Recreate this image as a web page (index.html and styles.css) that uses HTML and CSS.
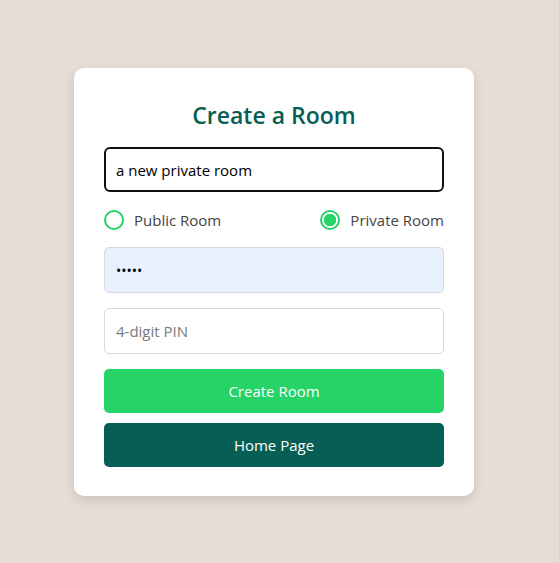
FILE: index.html
```html
<!DOCTYPE html>
<html lang="en">
<head>
<meta charset="utf-8">
<title>Create a Room</title>
<link rel="stylesheet" href="styles.css">
</head>
<body>
<div class="card">
  <h2 class="title">Create a Room</h2>
  <form class="form">
    <input class="field field-focus" type="text" value="a new private room">
    <div class="radios">
      <label class="radio"><input type="radio" name="type"><span>Public Room</span></label>
      <label class="radio"><input type="radio" name="type" checked><span>Private Room</span></label>
    </div>
    <input class="field field-auto" type="password" value="12345">
    <input class="field" type="text" placeholder="4-digit PIN">
    <button type="button" class="btn btn-create">Create Room</button>
    <button type="button" class="btn btn-home">Home Page</button>
  </form>
</div>
</body>
</html>
```

FILE: styles.css
```css
html, body {
  margin: 0;
  padding: 0;
}
body {
  background: #e5ddd6;
  min-height: 100vh;
  display: flex;
  align-items: center;
  justify-content: center;
  padding-right: 11px;
  padding-top: 1px;
  box-sizing: border-box;
  font-family: "Open Sans", "Noto Sans", sans-serif;
}
.card {
  width: 400px;
  box-sizing: border-box;
  background: #fff;
  border-radius: 10px;
  box-shadow: 0 4px 12px rgba(0, 0, 0, 0.12);
  padding: 31px 30px 29px;
}
.title {
  margin: 0 0 16px;
  text-align: center;
  color: #075e54;
  font-size: 23px;
  font-weight: 600;
  line-height: 32px;
}
.form {
  display: flex;
  flex-direction: column;
}
.field {
  height: 46px;
  box-sizing: border-box;
  border: 1px solid #d9d9d9;
  border-radius: 5px;
  padding: 0 11px;
  font-family: inherit;
  font-size: 15px;
  color: #000;
  background: #fff;
  outline: none;
  margin-bottom: 15px;
}
.field::placeholder {
  color: #7a7a7a;
}
.field-focus {
  border: 2px solid #111;
  border-radius: 6px;
  padding: 0 10px;
  height: 45px;
  margin-bottom: 0;
}
.field-auto {
  background: #e8f0fe;
  font-size: 14px;
}
.radios {
  display: flex;
  justify-content: space-between;
  align-items: center;
  height: 55px;
}
.radio {
  display: flex;
  align-items: center;
  gap: 10px;
  font-size: 15px;
  color: #444;
}
.radio input {
  appearance: none;
  -webkit-appearance: none;
  margin: 0;
  width: 20px;
  height: 20px;
  border: 2px solid #25d366;
  border-radius: 50%;
  box-sizing: border-box;
  background: #fff;
}
.radio input:checked {
  background: radial-gradient(circle, #25d366 0 6px, #fff 6.5px);
}
.btn {
  height: 44px;
  border: none;
  border-radius: 5px;
  color: #fff;
  font-family: inherit;
  font-size: 15px;
  cursor: pointer;
}
.btn-create {
  background: #25d366;
  margin-bottom: 10px;
}
.btn-home {
  background: #075e54;
}
```
